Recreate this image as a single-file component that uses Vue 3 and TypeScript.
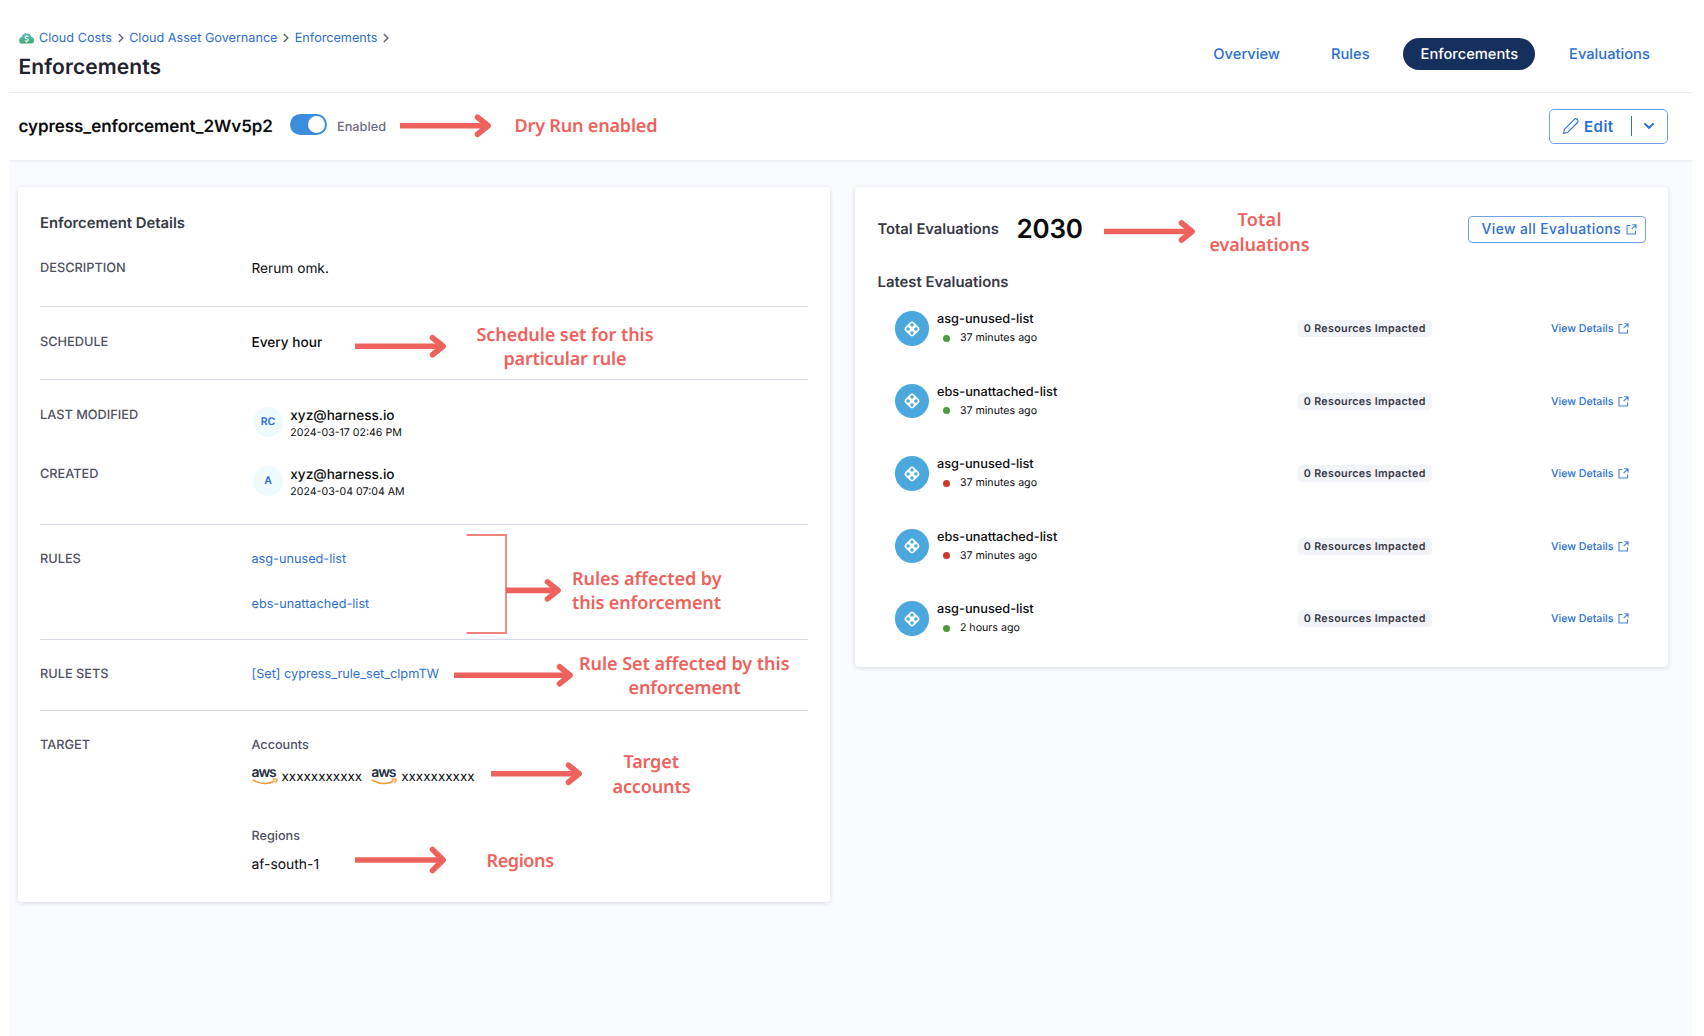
<script setup lang="ts">
interface Evaluation {
  name: string
  ago: string
  ok: boolean
}

interface Note {
  text: string
  x: number
  y: number
  width: number
}

interface Arrow {
  from: number
  to: number
  y: number
  spread: number
}

const crumbs = ['Cloud Costs', 'Cloud Asset Governance', 'Enforcements']
const tabs = ['Overview', 'Rules', 'Enforcements', 'Evaluations']
const activeTab = 'Enforcements'

const people = [
  { label: 'LAST MODIFIED', initials: 'RC', email: 'xyz@harness.io', date: '2024-03-17 02:46 PM' },
  { label: 'CREATED', initials: 'A', email: 'xyz@harness.io', date: '2024-03-04 07:04 AM' },
]

const accounts = ['xxxxxxxxxxx', 'xxxxxxxxxx']

const evaluations: Evaluation[] = [
  { name: 'asg-unused-list', ago: '37 minutes ago', ok: true },
  { name: 'ebs-unattached-list', ago: '37 minutes ago', ok: true },
  { name: 'asg-unused-list', ago: '37 minutes ago', ok: false },
  { name: 'ebs-unattached-list', ago: '37 minutes ago', ok: false },
  { name: 'asg-unused-list', ago: '2 hours ago', ok: true },
]

const notes: Note[] = [
  { text: 'Dry Run enabled', x: 514.5, y: 131.5, width: 143 },
  { text: 'Schedule set for this', x: 476.5, y: 340.5, width: 177 },
  { text: 'particular rule', x: 503.5, y: 364.5, width: 123 },
  { text: 'Rules affected by', x: 572, y: 584.5, width: 149.5 },
  { text: 'this enforcement', x: 572, y: 608.5, width: 149 },
  { text: 'Rule Set affected by this', x: 579, y: 669.5, width: 210.5 },
  { text: 'enforcement', x: 628.5, y: 693.5, width: 112 },
  { text: 'Target', x: 623.5, y: 767.5, width: 55.5 },
  { text: 'accounts', x: 612.5, y: 792.5, width: 78 },
  { text: 'Regions', x: 486.5, y: 866.5, width: 67.5 },
  { text: 'Total', x: 1237.5, y: 225.5, width: 44 },
  { text: 'evaluations', x: 1209.5, y: 250.5, width: 100 },
]

const arrows: Arrow[] = [
  { from: 400, to: 491.5, y: 125.7, spread: 8.5 },
  { from: 355, to: 446.5, y: 346.2, spread: 8.5 },
  { from: 506, to: 561.5, y: 590.4, spread: 8.5 },
  { from: 454, to: 573.5, y: 675.2, spread: 8.5 },
  { from: 491, to: 582.5, y: 773.7, spread: 8.5 },
  { from: 355, to: 446.5, y: 860, spread: 10.5 },
  { from: 1104, to: 1195.5, y: 231.5, spread: 8.5 },
]

const arrowHead = (a: Arrow): string =>
  `M${a.to - 14} ${a.y - a.spread}L${a.to - 3.4} ${a.y}L${a.to - 14} ${a.y + a.spread}`
</script>

<template>
  <div class="page">
    <header class="top">
      <div class="heading">
        <nav class="crumbs">
          <svg class="cloud" width="16" height="12" viewBox="0 0 16 12">
            <defs>
              <linearGradient id="cloudFill" x1="0" y1="0" x2="0" y2="1">
                <stop offset="0" stop-color="#5cc3bd" />
                <stop offset="1" stop-color="#3fa66f" />
              </linearGradient>
            </defs>
            <path fill="url(#cloudFill)" d="M3.4 11.6A3.3 3.3 0 0 1 2.6 5.1 5 5 0 0 1 12.3 4.9 3.4 3.4 0 0 1 12.4 11.6Z" />
            <path fill="none" stroke="#fff" stroke-width="1.1" d="M9.2 4.9C8.8 4.2 6.2 4 6.1 5.5 6.1 7.1 9.4 6.3 9.4 8 9.3 9.5 6.4 9.4 5.9 8.4M7.7 3v1.2M7.7 9.2v1.4" />
          </svg>
          <template v-for="crumb in crumbs" :key="crumb">
            <a class="crumb">{{ crumb }}</a>
            <svg class="sep" width="6" height="10" viewBox="0 0 6 10">
              <path d="M.8 1 4.9 5 .8 9" />
            </svg>
          </template>
        </nav>
        <h1>Enforcements</h1>
      </div>
      <nav class="tabs">
        <a v-for="tab in tabs" :key="tab" class="tab" :class="{ active: tab === activeTab }">{{ tab }}</a>
      </nav>
    </header>

    <section class="bar">
      <h2>cypress_enforcement_2Wv5p2</h2>
      <span class="toggle"><i></i></span>
      <span class="enabled">Enabled</span>
      <button class="edit">
        <svg width="18" height="18" viewBox="0 0 18 18">
          <path d="M1.6 16.4 2.4 12.4 12.4 2.3Q13.9 1 15.5 2.5 16.9 4.1 15.6 5.5L5.5 15.6Z" />
        </svg>
        <span>Edit</span>
        <i class="split"></i>
        <svg class="caret" width="12" height="8" viewBox="0 0 12 8"><path d="M1.4 1.4 6 5.8 10.6 1.4" /></svg>
      </button>
    </section>

    <main class="content">
      <article class="card details">
        <h3>Enforcement Details</h3>
        <div class="row simple">
          <span class="label">DESCRIPTION</span>
          <span class="value">Rerum omk.</span>
        </div>
        <div class="row simple">
          <span class="label">SCHEDULE</span>
          <span class="value medium">Every hour</span>
        </div>
        <div class="row people">
          <div v-for="p in people" :key="p.label" class="person">
            <span class="label">{{ p.label }}</span>
            <span class="avatar">{{ p.initials }}</span>
            <span class="who">
              <b>{{ p.email }}</b>
              <small>{{ p.date }}</small>
            </span>
          </div>
        </div>
        <div class="row rules">
          <span class="label">RULES</span>
          <span class="links">
            <a>asg-unused-list</a>
            <a>ebs-unattached-list</a>
          </span>
        </div>
        <div class="row sets">
          <span class="label">RULE SETS</span>
          <a>[Set] cypress_rule_set_clpmTW</a>
        </div>
        <div class="row target">
          <span class="label">TARGET</span>
          <div>
            <div class="sub">Accounts</div>
            <div class="accounts">
              <span v-for="account in accounts" :key="account" class="account">
                <span class="aws">
                  <span>aws</span>
                  <svg width="26" height="8" viewBox="0 10 26 8">
                    <path d="M.8 11.6C7 16.4 17 16.6 22.6 13" />
                    <path d="M20.6 11.5C23 10.8 24.8 10.9 25 11.3 25.2 11.9 24.7 13.5 23.6 14.7" />
                  </svg>
                </span>
                <span>{{ account }}</span>
              </span>
            </div>
            <div class="sub regions">Regions</div>
            <div class="region">af-south-1</div>
          </div>
        </div>
      </article>

      <article class="card evaluations">
        <div class="total">
          <h3>Total Evaluations</h3>
          <strong>2030</strong>
          <button class="view-all">
            <span>View all Evaluations</span>
            <svg width="11" height="11" viewBox="0 0 11 11">
              <path d="M4.3 1.5H1V10H9.5V6.4M6.3.8H10V4.5M10 .8 5.6 5.2" />
            </svg>
          </button>
        </div>
        <h3 class="latest">Latest Evaluations</h3>
        <div v-for="(e, i) in evaluations" :key="i" class="evaluation">
          <span class="badge">
            <svg width="18" height="18" viewBox="0 0 18 18">
              <rect x="2.9" y="2.9" width="12.2" height="12.2" rx="3.2" transform="rotate(45 9 9)" fill="#fff" />
              <g fill="#4aa8de">
                <circle cx="9" cy="5.1" r="1.75" />
                <circle cx="9" cy="12.9" r="1.75" />
                <circle cx="5.1" cy="9" r="1.75" />
                <circle cx="12.9" cy="9" r="1.75" />
              </g>
            </svg>
          </span>
          <span class="info">
            <span class="name">{{ e.name }}</span>
            <span class="ago"><i :class="e.ok ? 'ok' : 'bad'"></i>{{ e.ago }}</span>
          </span>
          <span class="impact"><span>0 Resources Impacted</span></span>
          <a class="view">
            View Details
            <svg width="11" height="11" viewBox="0 0 11 11">
              <path d="M4.3 1.5H1V10H9.5V6.4M6.3.8H10V4.5M10 .8 5.6 5.2" />
            </svg>
          </a>
        </div>
      </article>
    </main>

    <svg class="notes" width="1704" height="1036" viewBox="0 0 1704 1036">
      <path class="bracket" d="M466.5 535H506V633H466.5" />
      <g v-for="(a, i) in arrows" :key="i" class="arrow">
        <path class="shaft" :d="`M${a.from} ${a.y}H${a.to - 4}`" />
        <path class="head" :d="arrowHead(a)" />
      </g>
      <text v-for="note in notes" :key="note.text" :x="note.x" :y="note.y" :textLength="note.width">{{ note.text }}</text>
    </svg>
  </div>
</template>

<style>
body {
  background: #fff;
}
</style>

<style scoped>
* {
  box-sizing: border-box;
}

.page {
  position: relative;
  width: 1704px;
  height: 1036px;
  padding: 0 12px 0 9px;
  overflow: hidden;
  display: flex;
  flex-direction: column;
  background: #fff;
  color: #0b0b0d;
  font-family: Inter, "Liberation Sans", sans-serif;
  text-rendering: geometricPrecision;
}

h1,
h2,
h3 {
  margin: 0;
}

a {
  color: #2b6fd0;
}

button {
  font-family: inherit;
  color: #2b6fd0;
  background: #fff;
  border: 1px solid #6fa4e4;
  padding: 0;
  display: flex;
  align-items: center;
}

svg {
  display: block;
  flex: none;
}

.top {
  flex: none;
  height: 93px;
  display: flex;
  justify-content: space-between;
  border-bottom: 1px solid #ebecf1;
}

.heading {
  padding: 27px 0 0 9.5px;
}

.crumbs {
  display: flex;
  align-items: center;
  height: 21px;
}

.cloud {
  margin-right: 4.5px;
}

.crumb {
  padding-top: 1px;
  font-size: 12.65px;
  line-height: 21px;
}

.sep {
  margin: 0 5.5px 0 5.8px;
}

.sep path {
  fill: none;
  stroke: #5a5c70;
  stroke-width: 1.3;
}

h1 {
  margin-top: 5.5px;
  font-size: 21px;
  line-height: 28px;
  font-weight: 600;
  letter-spacing: 0.1px;
  color: #22222c;
}

.tabs {
  display: flex;
  align-items: center;
  height: 32px;
  margin: 38px 25px 0 0;
}

.tab {
  padding: 1px 17.2px 0;
  font-size: 14.7px;
  line-height: 31px;
  font-weight: 500;
  margin-left: 16.6px;
}

.tab.active {
  color: #fff;
  background: #16305e;
  border-radius: 16px;
}

.bar {
  flex: none;
  height: 69px;
  display: flex;
  align-items: center;
  padding: 0 24px 1px 9.5px;
  border-bottom: 2px solid #eff1f6;
}

h2 {
  width: 271px;
  padding-top: 1px;
  font-size: 17px;
  line-height: 24px;
  font-weight: 600;
  letter-spacing: -0.07px;
}

.toggle {
  display: flex;
  justify-content: flex-end;
  width: 37.5px;
  height: 21.5px;
  margin-top: -3px;
  padding: 2px;
  border-radius: 11px;
  background: #3d8ddd;
}

.toggle i {
  width: 17.5px;
  height: 17.5px;
  border-radius: 50%;
  background: #fff;
}

.enabled {
  margin-left: 10px;
  padding-top: 3px;
  font-size: 12.75px;
  font-weight: 500;
  color: #6b6c84;
}

.edit {
  width: 119px;
  height: 35px;
  margin-left: auto;
  padding-left: 12px;
  border-radius: 5px;
}

.edit span {
  margin-left: 4px;
  font-size: 15px;
  font-weight: 600;
  letter-spacing: 0.5px;
}

.edit path {
  fill: none;
  stroke: #2b6fd0;
  stroke-width: 1.1;
}

.edit .caret path {
  stroke-width: 2;
}

.edit .split {
  width: 1px;
  height: 20px;
  margin: 0 11.5px 0 17px;
  background: #2b6fd0;
}

.content {
  flex: 1;
  display: flex;
  align-items: flex-start;
  gap: 25px;
  padding: 25px 24px 0 9px;
  background: #fafbff;
}

.card {
  background: #fff;
  border-radius: 4px;
  box-shadow: 0 1px 4px rgba(40, 41, 61, 0.16);
}

.details {
  width: 812px;
  height: 714.5px;
  padding: 26px 22px 0;
}

h3 {
  font-size: 14.85px;
  line-height: 20px;
  font-weight: 600;
  color: #383946;
}

.row {
  display: flex;
  border-bottom: 1px solid #d9dae5;
  padding-top: 25.5px;
  font-size: 12.7px;
  line-height: 20px;
}

.row:last-child {
  border-bottom: 0;
}

.label {
  flex: none;
  width: 211.5px;
  font-size: 12.75px;
  font-weight: 500;
  color: #4f5162;
}

.simple {
  height: 73px;
}

.simple:nth-child(2) {
  height: 74px;
}

.value {
  padding-top: 0.8px;
  font-size: 13.7px;
}

.value.medium {
  padding-top: 0;
  font-weight: 500;
  font-size: 13.65px;
}

.people {
  height: 144.5px;
  padding-top: 27px;
  flex-direction: column;
  gap: 29px;
}

.person {
  display: flex;
  height: 30px;
}

.person .label {
  padding-top: 0.5px;
  line-height: 15px;
}

.avatar {
  width: 30px;
  height: 30px;
  margin: 0 7.3px 0 1.5px;
  border-radius: 50%;
  background: #effafe;
  color: #2b6fd0;
  font-size: 10.5px;
  font-weight: 600;
  line-height: 30px;
  text-align: center;
}

.who b,
.who small {
  display: block;
}

.who b {
  font-size: 13.6px;
  line-height: 18px;
  font-weight: 500;
}

.who small {
  font-size: 10.6px;
  line-height: 16px;
}

.rules {
  height: 115px;
}

.links {
  display: flex;
  flex-direction: column;
  gap: 24.5px;
}

.sets {
  height: 71px;
}

.sub {
  font-size: 12.65px;
  font-weight: 500;
  color: #4f5162;
}

.accounts {
  display: flex;
  gap: 9px;
  height: 18px;
  margin-top: 10.5px;
}

.account {
  display: flex;
  gap: 4px;
  font-size: 13.45px;
  line-height: 20px;
}

.aws {
  width: 26px;
}

.aws span {
  display: block;
  height: 11px;
  font-size: 14px;
  line-height: 11px;
  font-weight: 600;
  letter-spacing: -1.1px;
  color: #252f3e;
}

.aws path {
  fill: none;
  stroke: #f29c38;
  stroke-width: 1.5;
}

.regions {
  margin-top: 42px;
}

.region {
  margin-top: 8px;
  font-size: 13.9px;
}

.evaluations {
  width: 813px;
  height: 480px;
  padding: 25px 22px 0 22.5px;
}

.total {
  display: flex;
  align-items: center;
  height: 34px;
}

.total h3 {
  width: 139px;
  font-size: 14.75px;
}

.total strong {
  padding-top: 1px;
  font-size: 26px;
  line-height: 32px;
  font-weight: 600;
  letter-spacing: -0.2px;
}

.view-all {
  width: 178px;
  height: 27px;
  margin-left: auto;
  padding-left: 12.5px;
  gap: 5px;
  border-radius: 4px;
}

.view-all span {
  font-size: 13.8px;
  font-weight: 500;
  letter-spacing: 0.45px;
}

.view-all path,
.view path {
  fill: none;
  stroke: #4583da;
  stroke-width: 1.1;
}

.latest {
  margin: 26px 0 0.3px;
}

.evaluation {
  display: flex;
  align-items: center;
  height: 72.5px;
  padding-left: 17px;
}

.badge {
  display: flex;
  align-items: center;
  justify-content: center;
  width: 34.5px;
  height: 34.5px;
  border-radius: 50%;
  background: #4aa8de;
}

.info {
  width: 361px;
  margin: 1.6px 0 0 8px;
}

.name,
.ago {
  display: flex;
  align-items: center;
  line-height: 18px;
}

.name {
  font-size: 12.75px;
  font-weight: 500;
}

.ago {
  font-size: 10.65px;
}

.ago i {
  width: 7px;
  height: 7px;
  margin: 0 10.2px 0 5.7px;
  border-radius: 50%;
}

.ok {
  background: #4a9c3b;
}

.bad {
  background: #c93a2b;
}

.impact {
  display: flex;
  width: 253px;
}

.impact span {
  width: 133.5px;
  border-radius: 4px;
  background: #f3f3fa;
  color: #383946;
  font-size: 10.7px;
  line-height: 17px;
  font-weight: 600;
  letter-spacing: 0.33px;
  text-align: center;
}

.view {
  display: flex;
  align-items: center;
  gap: 4.5px;
  font-size: 10.6px;
  font-weight: 500;
}

.notes {
  position: absolute;
  left: 0;
  top: 0;
  pointer-events: none;
}

.notes text {
  font: 600 18px "Noto Sans", "Open Sans", sans-serif;
  fill: #ed625c;
}

.bracket {
  fill: none;
  stroke: #f0827d;
  stroke-width: 1.8;
}

.arrow path {
  fill: none;
  stroke: #ed625c;
}

.shaft {
  stroke-width: 5.6;
}

.arrow .head {
  stroke-width: 5.6;
  stroke-linecap: round;
  stroke-linejoin: round;
}
</style>
